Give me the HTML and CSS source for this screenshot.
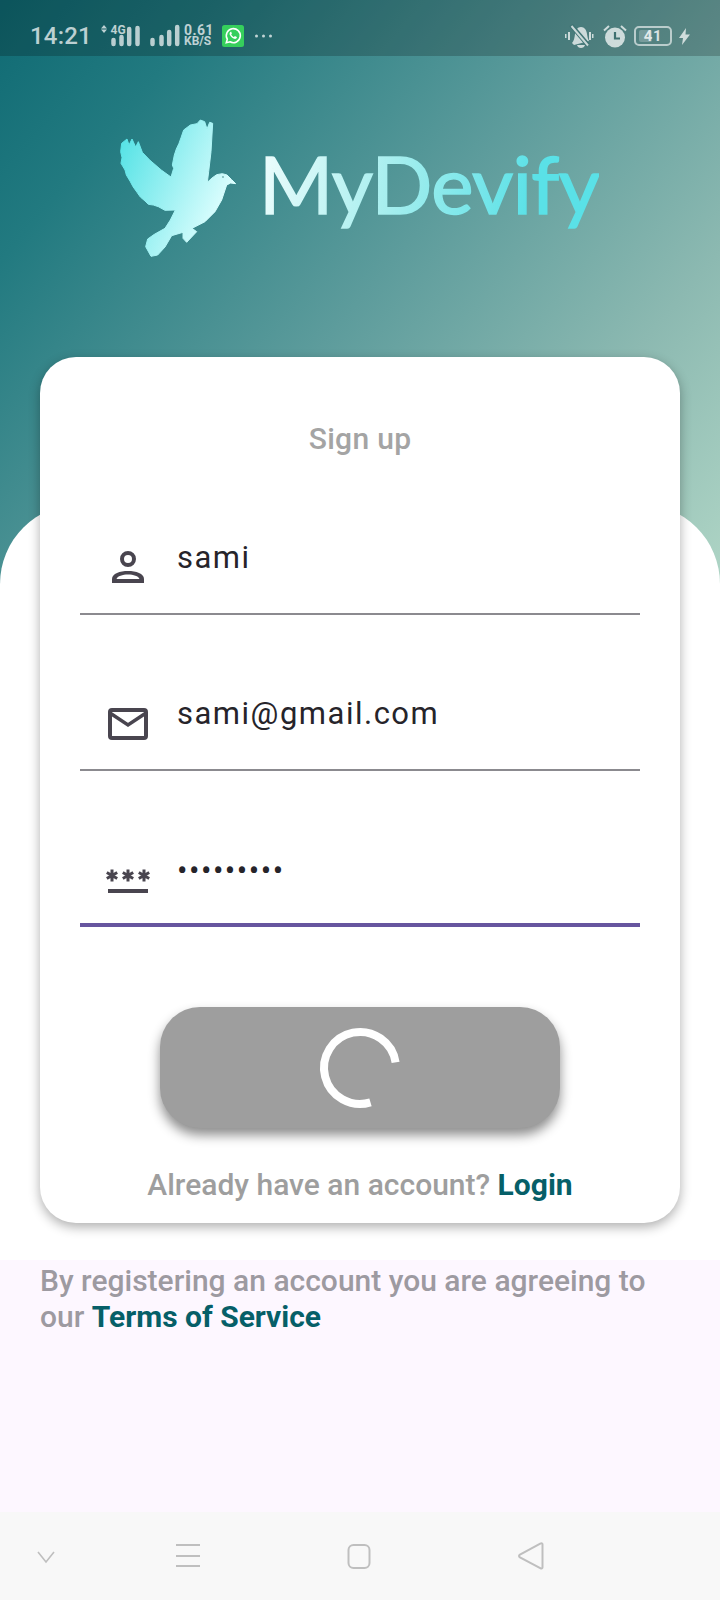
FILE: index.html
```html
<!DOCTYPE html>
<html lang="en">
<head>
<meta charset="utf-8">
<title>MyDevify Sign up</title>
<link rel="stylesheet" href="styles.css">
</head>
<body>
<div class="screen">
  <div class="backdrop"></div>
  <div class="sheet"></div>

  <div class="status">
    <div class="status-left">
      <span class="time">14:21</span>
      <svg class="sig sig-a" width="42" height="24" viewBox="100 24 42 24">
        <path class="st-fill" d="M104 25l3 3.400h-6zM104 33l3-3.400h-6z"/>
        <text class="tiny" x="110.500" y="34">4G</text>
        <path class="st-bar" d="M113.500 40v4M121.500 37v7M129.200 29v15M137.500 28v16"/>
      </svg>
      <svg class="sig sig-b" width="31" height="24" viewBox="147 24 31 24">
        <path class="st-bar" d="M150.500 40v4M159.500 37v7M167.200 32v12M175.200 27v17"/>
      </svg>
      <div class="speed"><span class="speed-n">0.61</span><span class="speed-u">KB/S</span></div>
      <svg class="wa" width="22" height="22" viewBox="0 0 22 22">
        <rect width="22" height="22" rx="2.500" fill="#36cf5c"/>
        <path d="M4.300 17.700l1-3.500a7 7 0 1 1 2.700 2.600z" fill="none" stroke="#fff" stroke-width="1.600"/>
        <path d="M8.300 6.900c-.9.700-1 2-.2 3.400 1 1.700 2.500 3 4.100 3.500 1.300.4 2.400-.2 2.700-1.200l-.1-.7-1.900-.9-.9 1c-1.200-.4-2.200-1.400-2.800-2.600l.7-.9-.8-1.900z" fill="#fff"/>
      </svg>
      <svg class="dots" width="20" height="6" viewBox="0 0 20 6">
        <circle class="st-fill" cx="2.500" cy="3" r="1.500"/><circle class="st-fill" cx="9.500" cy="3" r="1.500"/><circle class="st-fill" cx="16.500" cy="3" r="1.500"/>
      </svg>
    </div>
    <div class="status-right">
      <svg width="30" height="24" viewBox="0 0 30 24">
        <path class="st-fill" d="M8 19c2-2 2.500-5 3-9 .5-4 2.500-7 6-7 3.500 0 5.500 3 6 7 .4 3 1 5 2 7l-15 4-2-2zM13 21h8c-.5 2-2 3-4 3s-3.500-1-4-3z"/>
        <path d="M7 1l17 20" stroke="#3f7474" stroke-width="4.500"/>
        <path d="M7.500 2l16.500 19.500" class="st-line" stroke-width="2"/>
        <path class="st-fill" d="M4 8h2v8H4zM1 10h1.500v4H1zM25 8h2v8h-2zM28 10h1.500v4H28z"/>
      </svg>
      <svg class="alarm" width="24" height="24" viewBox="0 0 24 24">
        <circle class="st-fill" cx="12" cy="13.500" r="10"/>
        <path d="M12 8v6.500h5" fill="none" stroke="#3f7070" stroke-width="2.200"/>
        <path class="st-line" d="M1 6.500L6 2M23 6.500L18 2" stroke-width="2"/>
      </svg>
      <div class="battery"><span class="battery-level"></span><span class="battery-text">41</span></div>
      <svg class="bolt" width="11" height="17" viewBox="0 0 11 17">
        <path class="st-fill" d="M7 0L0 10h4l-1 7 8-10.500H6.500z"/>
      </svg>
    </div>
  </div>

  <div class="logo">
    <svg class="dove" width="130" height="150" viewBox="0 0 390 450">
      <defs>
        <linearGradient id="doveGrad" x1="0" y1="0.2" x2="0.85" y2="0.65">
          <stop offset="0" stop-color="#58e3e6"/>
          <stop offset="1" stop-color="#d8fdfd"/>
        </linearGradient>
      </defs>
      <path fill="url(#doveGrad)" stroke="url(#doveGrad)" stroke-width="3" stroke-linejoin="round" d="M362 206L350 194 336 180 322 176 305 179 291 189 277 202 281 170 288 110 293 25 284 22 276 42 269 20 256 15 246 26 226 30 206 45 198 68 192 85 184 102 178 120 172 150 176 160 168 186 140 166 105 136 82 112 70 80 62 96 51 72 42 90 36 72 20 85 17 110 21 128 18 145 30 165 34 180 46 200 54 215 66 232 76 246 90 258 100 268 115 270 130 275 150 286 181 285 166 315 150 340 118 358 98 372 92 395 108 424 128 420 150 396 170 362 204 352 204 370 215 382 245 350 231 340 270 320 300 290 320 255 335 210 347 204z"/>
      <circle cx="324" cy="186" r="2.500" fill="#3f7f80"/>
    </svg>
    <span class="wordmark">MyDevify</span>
  </div>

  <main class="card">
    <h1 class="title">Sign up</h1>

    <div class="field">
      <svg class="ficon" width="48" height="48" viewBox="0 0 48 48">
        <circle cx="24" cy="16" r="6" fill="none" stroke="#49454f" stroke-width="4"/>
        <path fill="#49454f" fill-rule="evenodd" d="M8 40v-4c0-5.500 8-8 16-8s16 2.500 16 8v4zM12.500 36h23c-1-3-6-4.500-11.500-4.500S13.500 33 12.500 36z"/>
      </svg>
      <span class="value">sami</span>
    </div>

    <div class="field">
      <svg class="ficon" width="48" height="48" viewBox="0 0 48 48">
        <rect x="6" y="11" width="36" height="28" rx="2" fill="none" stroke="#49454f" stroke-width="4"/>
        <path d="M6 14l18 12 18-12" fill="none" stroke="#49454f" stroke-width="3.500"/>
      </svg>
      <span class="value">sami@gmail.com</span>
    </div>

    <div class="field field-active">
      <svg class="ficon" width="48" height="48" viewBox="0 0 48 48">
        <g fill="none" stroke="#49454f" stroke-width="3">
          <path d="M8 14.500v12M2.800 17.500l10.400 6M13.200 17.500l-10.400 6"/>
          <path d="M24 14.500v12M18.800 17.500l10.400 6M29.200 17.500l-10.400 6"/>
          <path d="M40 14.500v12M34.800 17.500l10.400 6M45.200 17.500l-10.400 6"/>
        </g>
        <rect x="4" y="34" width="40" height="4" fill="#49454f"/>
      </svg>
      <span class="value value-pw">•••••••••</span>
    </div>

    <div class="submit">
      <svg width="88" height="88" viewBox="-44 -44 88 88">
        <path d="M35.600-5.600A36 36 0 1 0 10.500 34.400" fill="none" stroke="#fff" stroke-width="8"/>
      </svg>
    </div>

    <p class="switch">Already have an account? <strong class="link">Login</strong></p>
  </main>

  <p class="terms">By registering an account you are agreeing to our <strong class="link">Terms of Service</strong></p>

  <nav class="nav">
    <svg class="nav-chevron" width="48" height="48" viewBox="0 0 48 48">
      <path class="nav-line" d="M16 20l8 10 8-10" stroke-width="1.600"/>
    </svg>
    <svg class="nav-menu" width="48" height="48" viewBox="0 0 48 48">
      <path class="nav-line" d="M12 13h24M12 24h24M12 34h24" stroke-width="2"/>
    </svg>
    <svg class="nav-home" width="48" height="48" viewBox="0 0 48 48">
      <rect class="nav-line" x="13.500" y="13" width="21" height="23" rx="5" stroke-width="2"/>
    </svg>
    <svg class="nav-back" width="48" height="48" viewBox="0 0 48 48">
      <path class="nav-line" d="M37.500 12.500c0-1-1-1.500-1.800-1L15 22.500c-1.300 1-1.300 2 0 3l20.700 10.800c.8.500 1.800 0 1.800-1z" stroke-width="2"/>
    </svg>
  </nav>
</div>
</body>
</html>
```

FILE: styles.css
```css
* { box-sizing: border-box; }

html, body { margin: 0; padding: 0; }

body {
  width: 720px;
  height: 1600px;
  overflow: hidden;
  background: #fdf7ff;
  font-family: Roboto, "Liberation Sans", sans-serif;
}

.screen {
  position: relative;
  width: 720px;
  height: 1600px;
  display: flex;
  flex-direction: column;
  overflow: hidden;
}

.backdrop {
  position: absolute;
  left: 0;
  top: 0;
  width: 720px;
  height: 600px;
  background: linear-gradient(130deg, #0f6a73 0%, #227a80 18%, #5d9c9c 50%, #8cb9b1 76%, #b0d6c6 100%);
}

.sheet {
  position: absolute;
  left: 0;
  top: 504px;
  width: 720px;
  height: 756px;
  background: #fff;
  border-radius: 80px 80px 0 0;
}

/* status bar */
.status {
  position: relative;
  height: 56px;
  flex: none;
  display: flex;
  justify-content: space-between;
  align-items: center;
  padding: 16px 30px 0 30px;
  background: rgba(0, 0, 0, 0.2);
}

.status-left, .status-right {
  display: flex;
  align-items: center;
}

.time {
  font-size: 24px;
  line-height: 28px;
  width: 70px;
  font-weight: 500;
  letter-spacing: 0.2px;
  color: rgba(255, 255, 255, 0.72);
}

.st-fill { fill: rgba(255, 255, 255, 0.72); }
.st-line { fill: none; stroke: rgba(255, 255, 255, 0.72); }

.st-bar {
  fill: none;
  stroke: rgba(255, 255, 255, 0.7);
  stroke-width: 4.500px;
  stroke-linecap: round;
}

.tiny {
  font-family: Roboto, sans-serif;
  font-size: 12px;
  font-weight: 700;
  fill: rgba(255, 255, 255, 0.72);
}

.sig-a { margin-right: 7px; }

.sig-b { margin-right: 4px; }

.speed {
  width: 29px;
  display: flex;
  flex-direction: column;
  color: rgba(255, 255, 255, 0.72);
  font-weight: 700;
}

.speed-n { font-size: 14px; line-height: 11px; letter-spacing: 0.4px; }
.speed-u { font-size: 12px; line-height: 11px; }

.wa { margin-left: 9px; }

.dots { margin-left: 10px; }

.alarm { margin-left: 9px; }

.battery {
  position: relative;
  width: 38px;
  height: 20px;
  margin-left: 7px;
  border: 2px solid rgba(255, 255, 255, 0.6);
  border-radius: 5px;
  display: flex;
  align-items: center;
  justify-content: center;
}

.battery-level {
  position: absolute;
  left: 3px;
  top: 2px;
  bottom: 2px;
  width: 13px;
  border-radius: 2px;
  background: rgba(255, 255, 255, 0.22);
}

.battery-text {
  position: relative;
  font-size: 15px;
  font-weight: 700;
  line-height: 16px;
  letter-spacing: 0.6px;
  color: rgba(255, 255, 255, 0.78);
}

.bolt { margin-left: 7px; }

/* logo */
.logo {
  position: relative;
  flex: none;
  height: 301px;
  padding: 59px 0 0 115px;
  display: flex;
  align-items: flex-start;
}

.dove {
  flex: none;
  filter: blur(0.5px);
}

.wordmark {
  margin: 20px 0 0 14px;
  font-family: Lato, sans-serif;
  font-size: 80px;
  line-height: 96px;
  font-weight: 400;
  letter-spacing: -0.6px;
  color: transparent;
  -webkit-text-stroke: 1.6px transparent;
  background: linear-gradient(100deg, #effdfd 0%, #a5eeee 40%, #5ae1e7 80%);
  -webkit-background-clip: text;
  background-clip: text;
  filter: blur(0.4px);
}

/* card */
.card {
  position: relative;
  flex: none;
  margin: 0 40px;
  width: 640px;
  padding: 64px 40px 20px;
  background: #fff;
  border-radius: 36px;
  box-shadow: 0 4px 12px rgba(0, 0, 0, 0.32);
}

.title {
  margin: 0 0 86px;
  text-align: center;
  font-size: 30px;
  line-height: 36px;
  font-weight: 500;
  letter-spacing: 0.3px;
  color: #a4a4a4;
}

.field {
  height: 72px;
  margin-bottom: 84px;
  display: flex;
  align-items: flex-start;
  border-bottom: 2px solid #8b8a8f;
}

.field-active {
  margin-bottom: 80px;
  border-bottom: 4px solid #67559f;
}

.ficon {
  flex: none;
  margin: 0 25px 0 24px;
}

.value {
  margin-top: -3px;
  font-size: 31px;
  line-height: 36px;
  letter-spacing: 1.5px;
  color: #26242a;
}

.value-pw { margin-top: -2px; }

.submit {
  width: 400px;
  height: 121px;
  margin: 0 auto 39px;
  display: flex;
  align-items: center;
  justify-content: center;
  background: #9e9e9e;
  border-radius: 40px;
  box-shadow: 0 7px 12px rgba(0, 0, 0, 0.45);
}

.switch {
  margin: 0;
  text-align: center;
  font-size: 30px;
  line-height: 36px;
  font-weight: 500;
  color: #9e9e9e;
  white-space: nowrap;
}

.link {
  font-weight: 700;
  color: #065f68;
}

.terms {
  position: relative;
  flex: none;
  margin: 40px 0 0;
  padding: 0 40px;
  font-size: 30px;
  line-height: 36px;
  font-weight: 500;
  color: #9d9aa1;
}

/* navigation bar */
.nav {
  position: relative;
  margin-top: auto;
  flex: none;
  height: 88px;
  display: flex;
  align-items: center;
  padding-left: 22px;
  background: #f8f8f8;
}

.nav-line {
  fill: none;
  stroke: #bfbfbf;
}

.nav-menu { margin-left: 94px; }
.nav-home { margin-left: 123px; }
.nav-back { margin-left: 122px; }
```
